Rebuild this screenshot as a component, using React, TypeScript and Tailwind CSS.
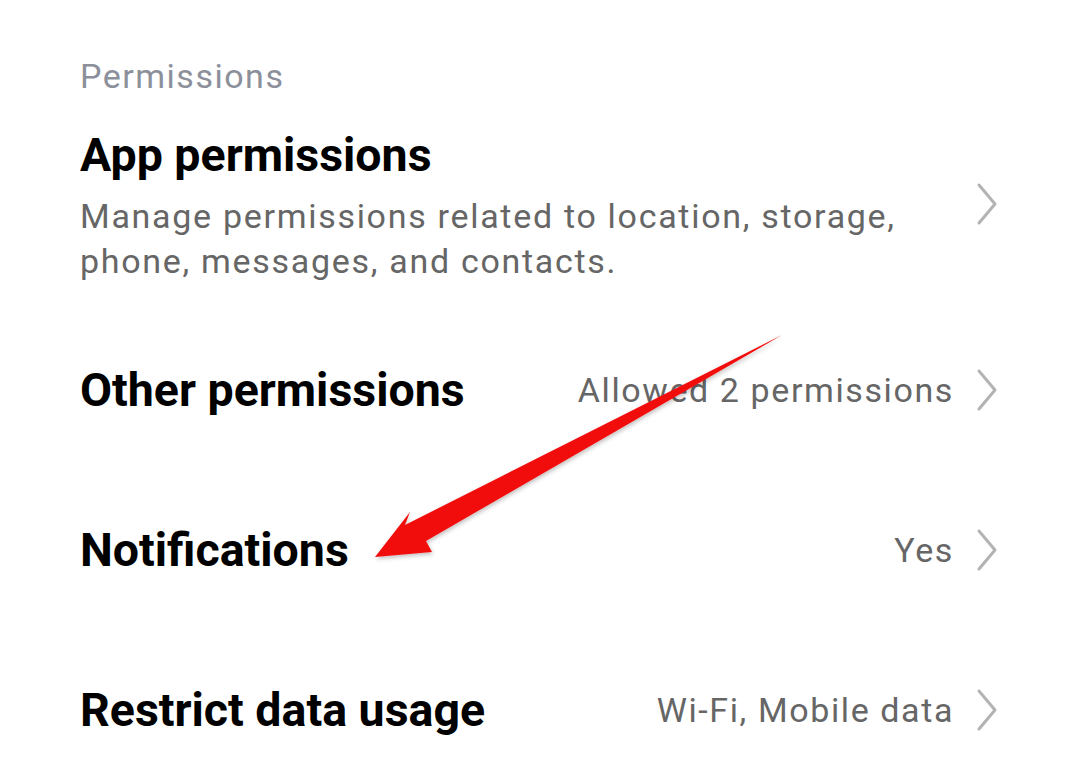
import { ReactNode } from "react";

function Chevron() {
  return (
    <svg width="22" height="44" viewBox="0 0 22 44" className="shrink-0">
      <path d="M3 3 L19 22 L3 41" fill="none" stroke="#b3b3b3" strokeWidth="3" strokeLinecap="round" strokeLinejoin="round" />
    </svg>
  );
}

function Row({ title, value }: { title: string; value?: ReactNode }) {
  return (
    <div className="h-[160px] flex items-center">
      <div className="flex-1 text-[46.5px] font-bold leading-none text-black">{title}</div>
      {value && <div className="text-[34px] tracking-[1.6px] text-[#666666] mr-[22px]">{value}</div>}
      <Chevron />
    </div>
  );
}

export default function App() {
  return (
    <div className="relative w-[1080px] h-[784px] bg-white overflow-hidden" style={{ fontFamily: "Roboto, 'Liberation Sans', sans-serif" }}>
      <div className="pl-[80px] pr-[82px]">
        <div className="h-[100px] pt-[56px] text-[34px] tracking-[1.5px] leading-[40px] text-[#8c909a]">Permissions</div>

        <div className="h-[210px] pt-[27px] flex items-center">
          <div className="flex-1 self-start">
            <div className="text-[46.5px] font-bold leading-[56px] text-black">App permissions</div>
            <div className="mt-[11px] text-[34px] tracking-[1.7px] leading-[45px] text-[#666666]">
              Manage permissions related to location, storage,
              <br />
              phone, messages, and contacts.
            </div>
          </div>
          <div className="ml-[20px] -mt-[30px]">
            <Chevron />
          </div>
        </div>

        <Row title="Other permissions" value="Allowed 2 permissions" />
        <Row title="Notifications" value="Yes" />
        <Row title="Restrict data usage" value="Wi-Fi, Mobile data" />
      </div>

      <svg className="absolute inset-0 pointer-events-none" width="1080" height="784" viewBox="0 0 1080 784">
        <defs>
          <filter id="sh" x="-10%" y="-10%" width="120%" height="120%">
            <feDropShadow dx="1" dy="2" stdDeviation="2" floodColor="#000" floodOpacity="0.25" />
          </filter>
        </defs>
        <path
          d="M782 335 L426 541 L432 552 L375 557 L410 512 L405 525 Z"
          fill="#f20f0f"
          filter="url(#sh)"
        />
      </svg>
    </div>
  );
}
